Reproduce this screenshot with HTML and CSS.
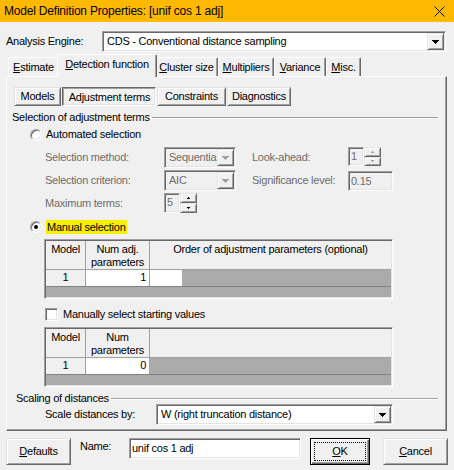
FILE: index.html
```html
<!DOCTYPE html>
<html lang="en">
<head>
<meta charset="utf-8">
<title>Model Definition Properties</title>
<link rel="stylesheet" href="styles.css">
</head>
<body>
<div class="titlebar">
  <span class="title">Model Definition Properties: [unif cos 1 adj]</span>
  <svg class="close" width="11" height="11" viewBox="0 0 11 11"><path d="M0.5 0.5L10.5 10.5M10.5 0.5L0.5 10.5" stroke="#000" stroke-width="1"/></svg>
</div>

<div class="engine-row">
  <span class="engine-label">Analysis Engine:</span>
  <div class="combo engine-combo">
    <span class="combo-text">CDS - Conventional distance sampling</span>
    <span class="drop-btn"><svg width="7" height="4" viewBox="0 0 7 4"><path d="M0 0h7v1H0zM1 1h5v1H1zM2 2h3v1H2zM3 3h1v1H3z"/></svg></span>
  </div>
</div>

<div class="tabs">
  <div class="tab w-est"><u>E</u>stimate</div>
  <div class="tab w-det active"><u>D</u>etection function</div>
  <div class="tab w-clu"><u>C</u>luster size</div>
  <div class="tab w-mul"><u>M</u>ultipliers</div>
  <div class="tab w-var"><u>V</u>ariance</div>
  <div class="tab w-misc"><u>M</u>isc.</div>
</div>

<div class="panel">
  <div class="subtabs">
    <div class="btn w-models">Models</div>
    <div class="btn w-adj pressed">Adjustment terms</div>
    <div class="btn w-con">Constraints</div>
    <div class="btn w-diag">Diagnostics</div>
  </div>

  <div class="group-head g-sel"><span class="group-label">Selection of adjustment terms</span><span class="etch"></span></div>

  <div class="radio-row r-auto"><span class="radio"></span><span>Automated selection</span></div>

  <div class="auto-grid">
    <span class="dis-label">Selection method:</span>
    <div class="combo disabled w-selm">
      <span class="combo-text">Sequentia</span>
      <span class="drop-btn"><svg width="7" height="4" viewBox="0 0 7 4"><path d="M0 0h7v1H0zM1 1h5v1H1zM2 2h3v1H2zM3 3h1v1H3z"/></svg></span>
    </div>
    <span class="dis-label">Look-ahead:</span>
    <div class="spinner top">
      <span class="edit disabled w-spin">1</span>
      <span class="spin-btns dis">
        <span class="spin"><svg width="3" height="2" viewBox="0 0 3 2"><path d="M1 0h1v1H1zM0 1h3v1H0z"/></svg></span>
        <span class="spin"><svg width="3" height="2" viewBox="0 0 3 2"><path d="M0 0h3v1H0zM1 1h1v1H1z"/></svg></span>
      </span>
    </div>

    <span class="dis-label">Selection criterion:</span>
    <div class="combo disabled w-selm">
      <span class="combo-text">AIC</span>
      <span class="drop-btn"><svg width="7" height="4" viewBox="0 0 7 4"><path d="M0 0h7v1H0zM1 1h5v1H1zM2 2h3v1H2zM3 3h1v1H3z"/></svg></span>
    </div>
    <span class="dis-label">Significance level:</span>
    <span class="edit disabled w-sig bottom">0.15</span>

    <span class="dis-label">Maximum terms:</span>
    <div class="spinner">
      <span class="edit disabled w-spin">5</span>
      <span class="spin-btns">
        <span class="spin"><svg width="3" height="2" viewBox="0 0 3 2"><path d="M1 0h1v1H1zM0 1h3v1H0z"/></svg></span>
        <span class="spin"><svg width="3" height="2" viewBox="0 0 3 2"><path d="M0 0h3v1H0zM1 1h1v1H1z"/></svg></span>
      </span>
    </div>
  </div>

  <div class="radio-row r-man"><span class="radio checked"></span><span class="hl">Manual selection</span></div>

  <div class="grid g1">
    <div class="g-head">
      <div>Model</div>
      <div>Num adj.<br>parameters</div>
      <div>Order of adjustment parameters (optional)</div>
    </div>
    <div class="g-row">
      <div class="c-fixed">1</div>
      <div class="c-num">1</div>
      <div class="c-white"></div>
    </div>
  </div>

  <div class="check-row"><span class="checkbox"></span><span>Manually select starting values</span></div>

  <div class="grid g2">
    <div class="g-head">
      <div>Model</div>
      <div>Num<br>parameters</div>
      <div></div>
    </div>
    <div class="g-row">
      <div class="c-fixed">1</div>
      <div class="c-num">0</div>
    </div>
  </div>

  <div class="group-head g-scale"><span class="group-label">Scaling of distances</span><span class="etch"></span></div>

  <div class="scale-row">
    <span class="scale-label">Scale distances by:</span>
    <div class="combo w-scale">
      <span class="combo-text">W (right truncation distance)</span>
      <span class="drop-btn"><svg width="7" height="4" viewBox="0 0 7 4"><path d="M0 0h7v1H0zM1 1h5v1H1zM2 2h3v1H2zM3 3h1v1H3z"/></svg></span>
    </div>
  </div>
</div>

<div class="footer">
  <div class="btn big w-defaults"><span><u>D</u>efaults</span></div>
  <span class="name-label">Name:</span>
  <span class="edit w-name">unif cos 1 adj</span>
  <div class="btn big default w-ok"><span class="focus"><u>O</u>K</span></div>
  <div class="btn big w-cancel"><span><u>C</u>ancel</span></div>
</div>
</body>
</html>
```

FILE: styles.css
```css
* { box-sizing: border-box; }
html, body { margin: 0; padding: 0; }
body {
  width: 454px;
  height: 470px;
  overflow: hidden;
  background: #f0f0f0;
  color: #000;
  font-family: "Liberation Sans", Arial, sans-serif;
  font-size: 11px;
  line-height: 13px;
  letter-spacing: -0.25px;
}
u { text-decoration: underline; text-underline-offset: 1px; }

/* title bar */
.titlebar {
  height: 22px;
  background: #ffb900;
  display: flex;
  align-items: center;
  justify-content: space-between;
  padding: 0 9px 0 4px;
}
.title { font-size: 12px; letter-spacing: -0.2px; line-height: 16px; }
.close { display: block; }

/* engine row */
.engine-row {
  display: flex;
  align-items: center;
  height: 21px;
  margin-top: 9px;
  padding-left: 6px;
}
.engine-label { width: 96px; flex: none; }
.engine-combo { width: 344px; }

/* 3D controls */
.combo {
  display: flex;
  align-items: stretch;
  height: 21px;
  background: #fff;
  border: 1px solid;
  border-color: #a0a0a0 #fff #fff #a0a0a0;
  box-shadow: inset 1px 1px #696969, inset -1px -1px #e3e3e3;
  padding: 1px;
  flex: none;
}
.combo-text {
  flex: 1;
  padding-left: 3px;
  line-height: 17px;
  white-space: nowrap;
  overflow: hidden;
}
.drop-btn {
  width: 17px;
  flex: none;
  display: flex;
  align-items: center;
  justify-content: center;
  background: #f0f0f0;
  border: 1px solid;
  border-color: #e3e3e3 #696969 #696969 #e3e3e3;
  box-shadow: inset 1px 1px #fff, inset -1px -1px #a0a0a0;
}
.drop-btn svg { display: block; fill: #000; }
.combo.disabled { background: #f0f0f0; color: #6d6d6d; }
.combo.disabled .drop-btn svg { fill: #a0a0a0; }

.edit {
  display: block;
  background: #fff;
  border: 1px solid;
  border-color: #a0a0a0 #fff #fff #a0a0a0;
  box-shadow: inset 1px 1px #696969, inset -1px -1px #e3e3e3;
  padding: 0 2px;
  white-space: nowrap;
}
.edit.disabled { background: #f0f0f0; color: #6d6d6d; }

.btn {
  display: flex;
  align-items: center;
  justify-content: center;
  height: 19px;
  background: #f0f0f0;
  border: 1px solid;
  border-color: #e3e3e3 #696969 #696969 #e3e3e3;
  box-shadow: inset 1px 1px #fff, inset -1px -1px #a0a0a0;
  white-space: nowrap;
  flex: none;
}
.btn.pressed {
  border-color: #696969 #fff #fff #696969;
  box-shadow: inset 1px 1px #a0a0a0, inset -1px -1px #e3e3e3;
  background: repeating-conic-gradient(#fff 0 25%, #e8e8e8 0 50%) 0 0 / 2px 2px;
  padding: 1px 0 0 1px;
}

/* tabs */
.tabs {
  position: relative;
  z-index: 1;
  display: flex;
  align-items: flex-end;
  height: 22px;
  margin: 2px 0 0 8px;
}
.tab {
  height: 19px;
  padding-top: 3px;
  text-align: center;
  white-space: nowrap;
  background: #f0f0f0;
  border: 1px solid;
  border-bottom: 0;
  border-color: #fff #696969 transparent #fff;
  box-shadow: inset -1px 0 #a0a0a0;
  border-radius: 2px 2px 0 0;
  flex: none;
}
.tab.active {
  height: 23px;
  margin: 0 -2px -1px;
  padding-top: 3px;
  position: relative;
  z-index: 1;
}
.w-est { width: 51px; }
.w-det { width: 100px; }
.w-clu { width: 63px; }
.w-mul { width: 56px; }
.w-var { width: 52px; }
.w-misc { width: 35px; }

/* panel */
.panel {
  width: 441px;
  height: 355px;
  margin-left: 6px;
  border: 1px solid;
  border-color: #fff #696969 #696969 #fff;
  box-shadow: inset -1px -1px #a0a0a0;
}
.subtabs {
  display: flex;
  gap: 1px;
  margin: 10px 0 0 7px;
}
.w-models { width: 47px; }
.w-adj { width: 94px; }
.w-con { width: 69px; }
.w-diag { width: 64px; }

.group-head {
  display: flex;
  align-items: center;
  height: 13px;
  margin: 5px 8px 0 5px;
}
.g-scale { margin: 6px 8px 0 9px; height: 11px; }
.group-label { padding-right: 2px; white-space: nowrap; }
.etch {
  flex: 1;
  height: 2px;
  border-top: 1px solid #a0a0a0;
  border-bottom: 1px solid #fff;
}

.radio-row {
  display: flex;
  align-items: center;
  height: 13px;
  margin-left: 23px;
  gap: 4px;
}
.r-auto { margin-top: 4px; }
.r-man { margin-top: 7px; }
.radio {
  width: 12px;
  height: 12px;
  flex: none;
  border-radius: 50%;
  border: 1px solid;
  border-color: #a0a0a0 #fff #fff #a0a0a0;
  box-shadow: inset 1px 1px #696969, inset -1px -1px #e3e3e3;
  background: #fff;
  display: flex;
  align-items: center;
  justify-content: center;
}
.radio.checked::after {
  content: "";
  width: 4px;
  height: 4px;
  border-radius: 50%;
  background: #000;
}
.hl { background: #f5ef00; padding: 0 1px; line-height: 14px; }

.auto-grid {
  display: grid;
  grid-template-columns: 119px 88px 96px auto;
  grid-template-rows: 21px 21px 20px;
  row-gap: 2px;
  margin: 6px 0 0 38px;
  align-items: center;
}
.dis-label { color: #6d6d6d; white-space: nowrap; }
.w-selm { width: 72px; }
.spinner { display: flex; height: 20px; }
.spinner.top { align-self: start; height: 19px; }
.spinner .edit { line-height: 17px; }
.w-spin { width: 16px; }
.w-sig { width: 45px; height: 20px; line-height: 18px; justify-self: start; }
.bottom { align-self: end; }
.spin-btns { display: flex; flex-direction: column; width: 17px; }
.spin {
  flex: 1;
  display: flex;
  align-items: center;
  justify-content: center;
  background: #f0f0f0;
  border: 1px solid;
  border-color: #e3e3e3 #696969 #696969 #e3e3e3;
  box-shadow: inset 1px 1px #fff, inset -1px -1px #a0a0a0;
}
.spin svg { display: block; fill: #000; }
.spin-btns.dis .spin svg { fill: #a0a0a0; }

/* grids */
.grid {
  width: 349px;
  height: 60px;
  margin: 6px 0 0 37px;
  background: #ababab;
  border: 1px solid;
  border-color: #a0a0a0 #fff #fff #a0a0a0;
  box-shadow: inset 1px 1px #696969, inset -1px -1px #e3e3e3;
  padding: 1px;
  display: flex;
  flex-direction: column;
}
.g-head {
  display: grid;
  grid-template-columns: 40px 64px 1fr;
  height: 29px;
  flex: none;
  background: #f0f0f0;
  border-bottom: 1px solid #a0a0a0;
}
.g-head > div {
  border-right: 1px solid #a0a0a0;
  text-align: center;
  padding-top: 2px;
  line-height: 13px;
  white-space: nowrap;
}
.g-head > div:last-child { border-right: 0; }
.g-row {
  display: grid;
  grid-template-columns: 40px 64px 32px;
  height: 17px;
  flex: none;
  border-bottom: 1px solid #808080;
}
.g-row > div {
  border-right: 1px solid #a0a0a0;
  line-height: 15px;
}
.c-fixed { background: #f0f0f0; text-align: center; }
.c-num { background: #fff; text-align: right; padding-right: 3px; }
.c-white { background: #fff; border-right: 0 !important; }

.check-row {
  display: flex;
  align-items: center;
  height: 13px;
  margin: 9px 0 0 38px;
  gap: 5px;
}
.checkbox {
  width: 13px;
  height: 13px;
  flex: none;
  border: 1px solid;
  border-color: #a0a0a0 #fff #fff #a0a0a0;
  box-shadow: inset 1px 1px #696969, inset -1px -1px #e3e3e3;
  background: #fff;
}

.scale-row {
  display: flex;
  align-items: center;
  margin: 0 0 0 38px;
}
.scale-label { width: 111px; flex: none; }
.w-scale { width: 237px; }

/* footer */
.footer {
  display: flex;
  align-items: flex-start;
  margin: 7px 0 0 6px;
}
.btn.big { height: 27px; }
.w-defaults { width: 65px; }
.name-label { width: 49px; margin-left: 9px; padding-top: 2px; flex: none; }
.w-name { width: 172px; height: 21px; line-height: 19px; flex: none; }
.w-ok { width: 60px; margin-left: 9px; }
.w-cancel { width: 65px; margin-left: 13px; }
.btn.default {
  border: 1px solid #000;
  box-shadow: inset 1px 1px #fff, inset -1px -1px #696969, inset -2px -2px #a0a0a0;
  padding: 3px;
  align-items: stretch;
}
.focus {
  flex: 1;
  display: flex;
  align-items: center;
  justify-content: center;
  border: 1px dotted #000;
}
```
